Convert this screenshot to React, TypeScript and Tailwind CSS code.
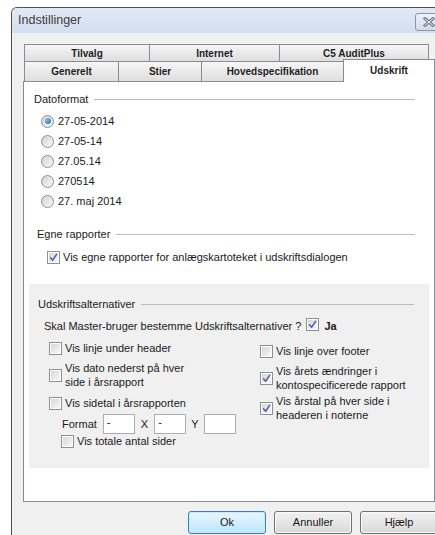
import React from 'react'

/* Indstillinger dialog, "Udskrift" tab */

const FONT = { fontFamily: '"Liberation Sans", Arial, sans-serif' }

function Check({ checked = false }: { checked?: boolean }) {
  return (
    <span className="relative inline-flex h-[13px] w-[13px] shrink-0 items-center justify-center border border-[#8e8f8f] bg-white">
      <span className="absolute inset-[1px] bg-gradient-to-br from-[#d6d6d6] to-[#f8f8f8]" />
      {checked && (
        <svg viewBox="0 0 11 11" className="relative h-[11px] w-[11px]">
          <path d="M2.5 5.8 L4.6 8.2 L8.6 2.4" fill="none" stroke="#4563a8" strokeWidth="1.5" strokeLinecap="round" strokeLinejoin="round" />
        </svg>
      )}
    </span>
  )
}

function Radio({ checked = false }: { checked?: boolean }) {
  return (
    <span className="inline-flex h-[13px] w-[13px] shrink-0 items-center justify-center rounded-full border border-[#8e8f8f] bg-gradient-to-br from-[#d2d2d2] to-[#fafafa]">
      {checked && <span className="h-[6px] w-[6px] rounded-full bg-[radial-gradient(circle_at_35%_35%,#7cc2f0,#1b5f9e)]" />}
    </span>
  )
}

function GroupHeader({ label, className }: { label: string; className: string }) {
  return (
    <div className={`flex items-center leading-[13px] ${className}`}>
      <span className="text-[11px] text-[#1a1a1a]">{label}</span>
      <span className="ml-[6px] h-px flex-1 bg-[#b9bcc4]" />
    </div>
  )
}

function TabBtn({ label, w }: { label: string; w: string }) {
  return (
    <div className={`-ml-px flex h-full items-center justify-center border border-b-0 border-[#898c95] bg-gradient-to-b from-[#f6f6f6] to-[#dedede] text-[10px] font-bold text-[#1e1e1e] first:ml-0 ${w}`}>
      {label}
    </div>
  )
}

function Field({ value }: { value?: string }) {
  return (
    <span className="flex h-[20px] w-[32px] items-start border border-[#abadb3] bg-white pl-[3px] pt-[1px] text-[11px] leading-[12px]">
      {value}
    </span>
  )
}

function Btn({ label, primary = false }: { label: string; primary?: boolean }) {
  return (
    <button
      className={
        primary
          ? 'flex h-[23px] w-[78px] items-center justify-center rounded-[3px] border border-[#3c7fb1] bg-gradient-to-b from-[#eaf6fd] to-[#bee6fd] text-[11px] text-[#1a1a1a] shadow-[inset_0_0_0_1px_#c8ecfb]'
          : 'flex h-[23px] w-[78px] shrink-0 items-center justify-center rounded-[3px] border border-[#707070] bg-gradient-to-b from-[#f2f2f2] to-[#d9d9d9] text-[11px] text-[#1a1a1a] shadow-[inset_0_0_0_1px_#fafafa]'
      }
    >
      {label}
    </button>
  )
}

export default function App() {
  const dates = ['27-05-2014', '27-05-14', '27.05.14', '270514', '27. maj 2014']

  return (
    <div className="h-[535px] w-[435px] overflow-hidden bg-white" style={FONT}>
      <div className="ml-[11px] mt-[7px] h-[540px] w-[440px] overflow-hidden rounded-tl-[6px] border-l border-t border-[#4e5257] bg-[#f0f0f0]">
        {/* title bar */}
        <div className="flex h-[25px] items-center justify-between bg-gradient-to-b from-[#e1e9f5] to-[#d2dfef] pl-[6px]">
          <span className="text-[12.5px] text-[#3c3c3c]">Indstillinger</span>
          <span className="mr-[6px] mt-[3px] flex h-[18px] w-[30px] items-center justify-start rounded-[3px] border border-[#8c98aa] bg-gradient-to-b from-[#eef2f8] to-[#d4dce8] pl-[7px]">
            <svg viewBox="0 0 12 10" className="h-[10px] w-[12px]">
              <path d="M2 1.5 L10 8.5 M10 1.5 L2 8.5" stroke="#6f7c90" strokeWidth="3" strokeLinecap="square" />
              <path d="M2 1.5 L10 8.5 M10 1.5 L2 8.5" stroke="#f4f6fa" strokeWidth="1" strokeLinecap="square" />
            </svg>
          </span>
        </div>

        <div className="pl-[11px]">
          {/* tab strip */}
          <div className="mt-[11px] flex h-[17px] pl-px">
            <TabBtn label="Tilvalg" w="w-[126px]" />
            <TabBtn label="Internet" w="w-[131px]" />
            <TabBtn label="C5 AuditPlus" w="w-[150px]" />
          </div>
          <div className="flex h-[20px] items-end pl-px">
            <TabBtn label="Generelt" w="w-[95px]" />
            <TabBtn label="Stier" w="w-[84px]" />
            <TabBtn label="Hovedspecifikation" w="w-[143px]" />
            <div className="relative z-10 -mb-px -ml-px flex h-[23px] w-[92px] items-start justify-center border border-b-0 border-[#898c95] bg-white pt-[3px] text-[10px] font-bold text-[#1e1e1e]">
              Udskrift
            </div>
          </div>

          {/* tab page */}
          <div className="h-[421px] w-[412px] border border-[#898c95] bg-white">
            <GroupHeader label="Datoformat" className="ml-[10px] mr-[19px] mt-[11px]" />
            <div className="mt-[5px] flex flex-col">
              {dates.map((d, i) => (
                <label key={d} className="ml-[17px] flex h-[20px] items-center gap-[4px] text-[11px] text-[#1a1a1a]">
                  <Radio checked={i === 0} />
                  <span>{d}</span>
                </label>
              ))}
            </div>

            <GroupHeader label="Egne rapporter" className="ml-[13px] mr-[19px] mt-[17px]" />
            <label className="ml-[23px] mt-[8px] flex h-[16px] items-center gap-[3px] text-[11px] text-[#1a1a1a]">
              <Check checked />
              <span>Vis egne rapporter for anlægskartoteket i udskriftsdialogen</span>
            </label>

            {/* print options */}
            <div className="ml-[5px] mt-[19px] h-[184px] w-[400px] bg-[#f0f0f0] pt-[14px]">
              <GroupHeader label="Udskriftsalternativer" className="ml-[9px] mr-[15px]" />
              <div className="ml-[15px] mt-[7px] flex h-[16px] items-center text-[11px] text-[#1a1a1a]">
                <span>Skal Master-bruger bestemme Udskriftsalternativer ?</span>
                <span className="ml-[5px]"><Check checked /></span>
                <span className="ml-[5px] font-bold">Ja</span>
              </div>

              <div className="flex text-[11px] leading-[14px] text-[#1a1a1a]">
                <div className="ml-[20px] w-[211px]">
                  <label className="mt-[7px] flex items-center gap-[3px]">
                    <Check />
                    <span>Vis linje under header</span>
                  </label>
                  <label className="mt-[6px] flex items-center gap-[3px]">
                    <Check />
                    <span>
                      Vis dato nederst på hver
                      <br />
                      side i årsrapport
                    </span>
                  </label>
                  <label className="mt-[7px] flex items-center gap-[3px]">
                    <Check />
                    <span>Vis sidetal i årsrapporten</span>
                  </label>
                  <div className="ml-[13px] mt-[4px] flex items-center">
                    <span className="mr-[6px]">Format</span>
                    <Field value="-" />
                    <span className="mx-[6px]">X</span>
                    <Field value="-" />
                    <span className="mx-[5px]">Y</span>
                    <Field />
                  </div>
                  <label className="ml-[12px] mt-0 flex items-center gap-[3px]">
                    <Check />
                    <span>Vis totale antal sider</span>
                  </label>
                </div>

                <div className="flex-1">
                  <label className="mt-[10px] flex items-center gap-[3px]">
                    <Check />
                    <span>Vis linje over footer</span>
                  </label>
                  <label className="mt-[6px] flex items-center gap-[3px]">
                    <Check checked />
                    <span>
                      Vis årets ændringer i
                      <br />
                      kontospecificerede rapport
                    </span>
                  </label>
                  <label className="mt-[2px] flex items-center gap-[3px]">
                    <Check checked />
                    <span>
                      Vis årstal på hver side i
                      <br />
                      headeren i noterne
                    </span>
                  </label>
                </div>
              </div>
            </div>
          </div>

          {/* dialog buttons */}
          <div className="ml-[165px] mt-[9px] flex gap-[8px]">
            <Btn label="Ok" primary />
            <Btn label="Annuller" />
            <Btn label="Hjælp" />
          </div>
        </div>
      </div>
    </div>
  )
}
